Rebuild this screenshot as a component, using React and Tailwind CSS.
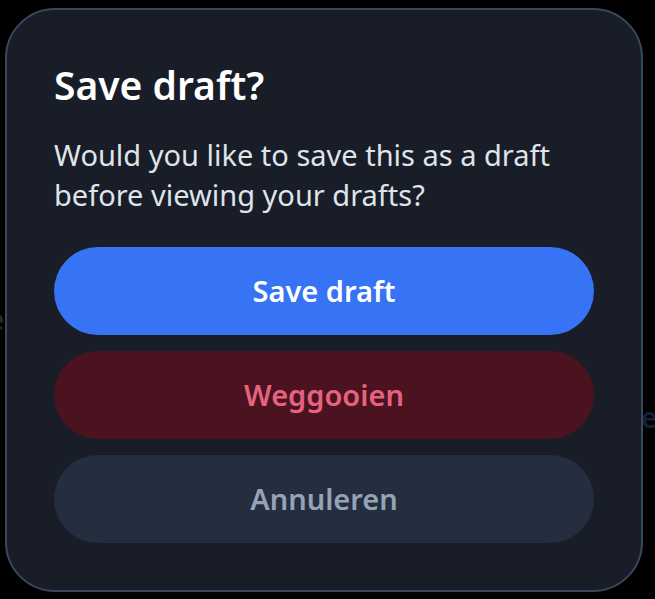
export default function App() {
  return (
    <div className="relative min-h-screen bg-black overflow-hidden font-['Noto_Sans','Open_Sans',sans-serif]">
      {/* faint page content behind the dialog */}
      <span className="absolute left-[-12px] top-[298px] text-[28px] font-semibold text-[#262b36]">
        e
      </span>
      <span className="absolute left-[641px] top-[396px] text-[28px] font-semibold text-[#17203a]">
        er
      </span>

      <div className="relative ml-[5px] mt-[8px] w-[638px] h-[584px] rounded-[50px] border-2 border-[#3a465c] bg-[#181d27] px-[47px] pt-[51px] flex flex-col">
        <h2 className="text-[39px] leading-[48px] font-semibold text-white">Save draft?</h2>
        <p className="mt-[26px] text-[29px] leading-[40px] text-[#dfe3ea]">
          Would you like to save this as a draft before viewing your drafts?
        </p>
        <div className="mt-[32px] flex flex-col gap-4">
          <button className="h-[88px] rounded-full bg-[#3673f5] text-[29px] font-semibold text-white">
            Save draft
          </button>
          <button className="h-[88px] rounded-full bg-[#4b131f] text-[29px] font-semibold text-[#e5637f]">
            Weggooien
          </button>
          <button className="h-[88px] rounded-full bg-[#252e3e] text-[29px] font-semibold text-[#94a3b8]">
            Annuleren
          </button>
        </div>
      </div>
    </div>
  );
}
